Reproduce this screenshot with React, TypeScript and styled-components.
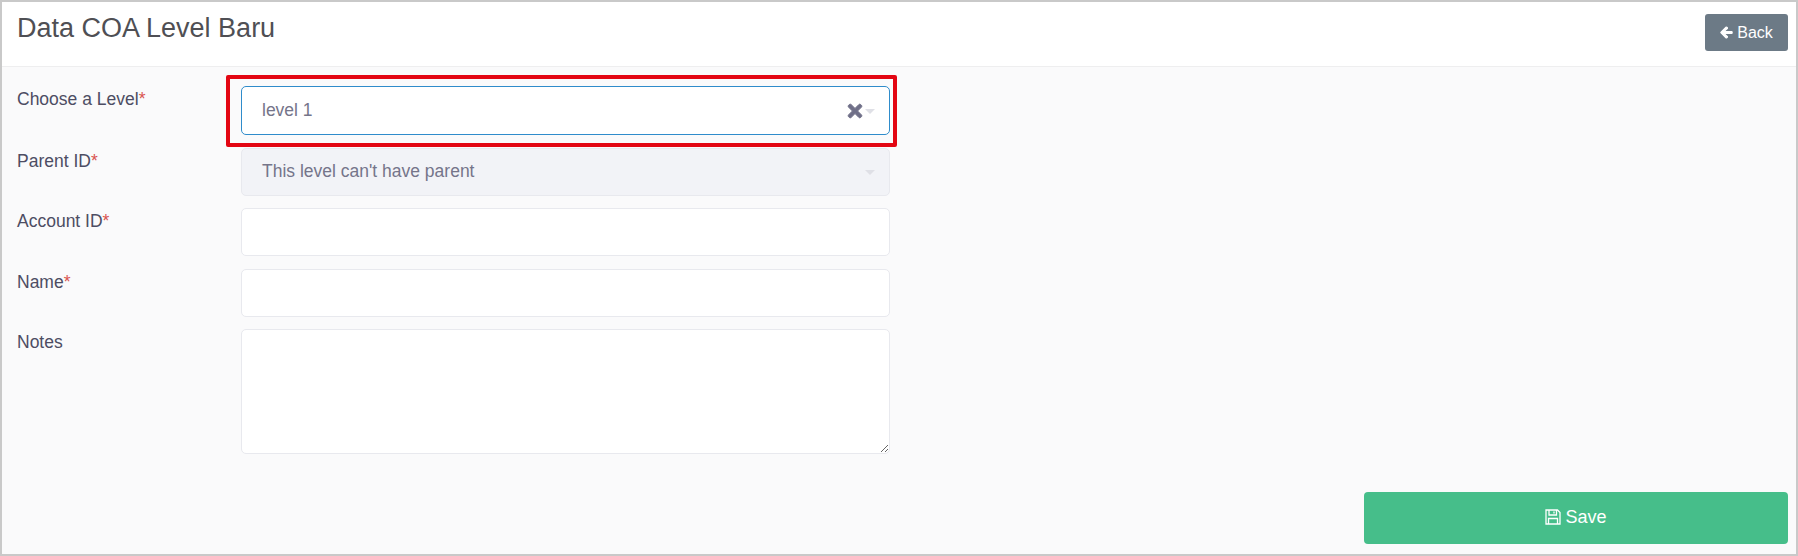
import React from 'react'
import styled, { createGlobalStyle } from 'styled-components'
import { FaArrowLeft, FaTimes } from 'react-icons/fa'

const GlobalStyle = createGlobalStyle`
    html, body {
        margin: 0;
        padding: 0;
        background: #fafafb;
    }
    * {
        box-sizing: border-box;
    }
`

const Frame = styled.div`
    width: 1798px;
    height: 556px;
    border: 2px solid #c9c9c9;
    background: #fafafb;
    font-family: "Liberation Sans", Arial, sans-serif;
    display: flex;
    flex-direction: column;
    overflow: hidden;
`

const Header = styled.header`
    height: 65px;
    flex: none;
    background: #ffffff;
    border-bottom: 1px solid #eeeeef;
    display: flex;
    justify-content: space-between;
    padding: 12px 8px 0 15px;
`

const Title = styled.h3`
    margin: -2px 0 0;
    font-size: 27px;
    line-height: 32px;
    font-weight: 400;
    color: #4f4f54;
`

const BackButton = styled.button`
    width: 83px;
    height: 37px;
    border: none;
    border-radius: 3px;
    background: #6c7a86;
    color: #ffffff;
    font: 16px "Liberation Sans", Arial, sans-serif;
    display: flex;
    align-items: center;
    justify-content: center;
    gap: 4px;
    padding: 0;
`

const BackIcon = styled(FaArrowLeft)`
    font-size: 13px;
    stroke: currentColor;
    stroke-width: 40px;
`

const Body = styled.div`
    flex: 1;
    display: flex;
    flex-direction: column;
    padding: 19px 8px 10px 15px;
`

const Form = styled.form`
    display: flex;
    flex-direction: column;
    gap: 12.5px;
    width: 874px;
`

const Row = styled.div`
    display: grid;
    grid-template-columns: 224px 649px;
`

const Label = styled.label`
    font-size: 17.5px;
    line-height: 24px;
    padding-top: 1px;
    color: #4d4d63;
`

const Star = styled.span`
    color: #d9534f;
`

const SelectBox = styled.div<{ $focused?: boolean; $disabled?: boolean }>`
    position: relative;
    height: ${(p) => (p.$focused ? '49px' : '48px')};
    border: 1px solid ${(p) => (p.$focused ? '#2f8ccb' : '#e8e9ee')};
    border-radius: 5px;
    background: ${(p) => (p.$disabled ? '#f2f3f7' : '#ffffff')};
    color: #75758a;
    font-size: 17.5px;
    display: flex;
    align-items: center;
    padding: 0 14px 0 20px;
`

const SelectText = styled.span`
    flex: 1;
`

const Clear = styled(FaTimes)`
    color: #6f6f88;
    font-size: 20px;
    stroke: currentColor;
    stroke-width: 24px;
`

const Caret = styled.span`
    width: 0;
    height: 0;
    border-left: 5px solid transparent;
    border-right: 5px solid transparent;
    border-top: 5px solid #dfe0e6;
    margin-top: 2px;
`

const TextInput = styled.input`
    height: 48px;
    width: 100%;
    border: 1px solid #e8e9ee;
    border-radius: 5px;
    background: #ffffff;
    outline: none;
`

const TextArea = styled.textarea`
    display: block;
    height: 125px;
    width: 100%;
    border: 1px solid #e8e9ee;
    border-radius: 5px;
    background: #ffffff;
    outline: none;
`

const Footer = styled.div`
    margin-top: auto;
    display: flex;
    justify-content: flex-end;
`

const SaveButton = styled.button`
    width: 424px;
    height: 52px;
    border: none;
    border-radius: 4px;
    background: #46be8a;
    color: #ffffff;
    font: 18px "Liberation Sans", Arial, sans-serif;
    display: flex;
    align-items: center;
    justify-content: center;
    gap: 4px;
    padding: 0 0 2px;
`

// the red box drawn over the screenshot, it marks the first select
const Highlight = styled.div`
    position: absolute;
    left: -16px;
    top: -12px;
    width: 671px;
    height: 72px;
    border: 4px solid #e30613;
    border-radius: 2px;
    pointer-events: none;
`

const SaveIcon = () => (
    <svg width="16" height="16" viewBox="0 0 16 16" fill="none" stroke="currentColor" strokeWidth="1.3">
        <path d="M1 1h11.5L15 3.5V15H1z" />
        <path d="M4 1v5h7.5V1" />
        <path d="M9 2.5v2" />
        <path d="M3.5 15V9.5h9V15" />
    </svg>
)

const App: React.FC = () => {
    return (
        <Frame>
            <GlobalStyle />
            <Header>
                <Title>Data COA Level Baru</Title>
                <BackButton type="button">
                    <BackIcon />
                    Back
                </BackButton>
            </Header>
            <Body>
                <Form>
                    <Row>
                        <Label>Choose a Level<Star>*</Star></Label>
                        <SelectBox $focused>
                            <SelectText>level 1</SelectText>
                            <Clear />
                            <Caret />
                            <Highlight />
                        </SelectBox>
                    </Row>
                    <Row>
                        <Label>Parent ID<Star>*</Star></Label>
                        <SelectBox $disabled>
                            <SelectText>This level can't have parent</SelectText>
                            <Caret />
                        </SelectBox>
                    </Row>
                    <Row>
                        <Label>Account ID<Star>*</Star></Label>
                        <TextInput />
                    </Row>
                    <Row>
                        <Label>Name<Star>*</Star></Label>
                        <TextInput />
                    </Row>
                    <Row>
                        <Label>Notes</Label>
                        <TextArea />
                    </Row>
                </Form>
                <Footer>
                    <SaveButton type="button">
                        <SaveIcon />
                        Save
                    </SaveButton>
                </Footer>
            </Body>
        </Frame>
    )
}

export default App
